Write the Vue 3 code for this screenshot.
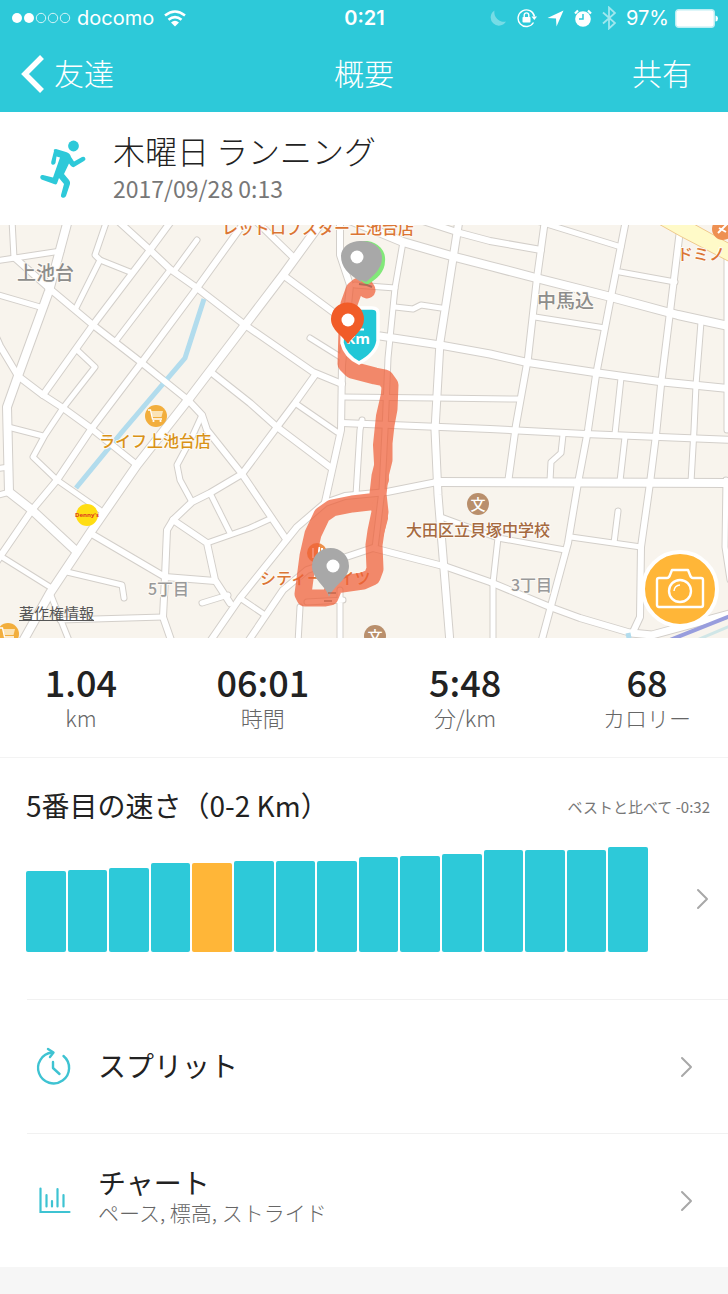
<script setup>
const roads = [
  { w: 8, d: 'M68 -5L49 66L18 151L7 182L9 267L32 285L75 325' },
  { w: 5, d: 'M12 -5L14 33' },
  { w: 5, d: 'M-5 36L15 33L61 26' },
  { w: 6, d: 'M15 33L50 64L93 100L142 138L188 175L202 190L207 205L242 249L286 314' },
  { w: 5, d: 'M-5 69L40 82' },
  { w: 6, d: 'M-5 110L0 121L18 151L43 170L63 183L92 204L137 240' },
  { w: 5, d: 'M107 -5L95 30L100 35L130 47' },
  { w: 5, d: 'M100 35L76 83' },
  { w: 6, d: 'M172 -5L150 25L93 100L43 170' },
  { w: 6, d: 'M117 -5L150 25L170 44L197 63L245 100L313 147L342 159' },
  { w: 5, d: 'M197 15L175 45' },
  { w: 5, d: 'M170 45L115 117' },
  { w: 6, d: 'M246 -5L197 63L142 137L92 203L57 255L32 285L-3 336' },
  { w: 5, d: 'M77 125L95 142L63 183L45 210L33 232L57 255L100 285' },
  { w: 8, d: 'M323 -5L283 50L245 100L188 175L137 240L90 308L50 368L22 418' },
  { w: 6, d: 'M212 148L250 178L277 202L330 242' },
  { w: 5, d: 'M202 190L192 212L177 240L180 255L192 277' },
  { w: 5, d: 'M8 202L43 211' },
  { w: 5, d: 'M-5 271L10 267M-5 244L9 242' },
  { w: 5, d: 'M2 332L50 362' },
  { w: 5, d: 'M67 347L122 360L124 373' },
  { w: 6, d: 'M90 308L165 352L215 356' },
  { w: 6, d: 'M315 150L295 178L277 202L242 249L210 268L192 277L173 295L167 305L165 352L163 392L172 418' },
  { w: 6, d: 'M173 295L207 318L215 355L230 378' },
  { w: 5, d: 'M207 318L250 303L272 293' },
  { w: 5, d: 'M210 268L230 308' },
  { w: 5, d: 'M202 378L228 370' },
  { w: 6, d: 'M209 418L240 373L297 302L325 278L345 271L387 267L437 257' },
  { w: 8, d: 'M437 257L733 258' },
  { w: 5, d: 'M60 395L163 392M50 368L70 418' },
  { w: 5, d: 'M240 373L265 390' },
  { w: 6, d: 'M247 418L283 365L307 345L373 323L447 342L490 357L550 382L580 393L631 408' },
  { w: 7, d: 'M631 408L652 410L733 388' },
  { w: 6, d: 'M340 -5L340 30L350 60L342 140L341 205L325 277' },
  { w: 5, d: 'M362 195L360 205L356 270' },
  { w: 5, d: 'M300 382L298 418M340 365L340 418M307 377L343 375' },
  { w: 6, d: 'M283 50L337 90M255 -5L293 32' },
  { w: 5, d: 'M310 113L342 133' },
  { w: 5, d: 'M295 178L337 207' },
  { w: 5, d: 'M403 17L395 63L388 133L385 205L382 265L375 323' },
  { w: 8, d: 'M350 -5L403 17L455 32L490 41L536 53L611 72L678 90L733 102' },
  { w: 6, d: 'M420 -5L460 8L490 16L541 25' },
  { w: 7, d: 'M459 -5L440 117L435 205L438 270L450 418' },
  { w: 5, d: 'M355 60L395 63M395 82L413 84L421 80L441 83' },
  { w: 7, d: 'M380 111L440 120L490 129L525 137L598 148L663 157L733 164' },
  { w: 5, d: 'M342 172L435 173L518 174' },
  { w: 6, d: 'M342 198L490 204L585 209L733 215' },
  { w: 6, d: 'M545 -5L537 53L528 133L516 200L508 258' },
  { w: 6, d: 'M626 -5L611 72L596 150L588 205L578 258L568 318L541 418' },
  { w: 6, d: 'M680 5L670 87L661 160L656 210L650 258L641 322L640 392L633 407' },
  { w: 5, d: 'M701 97L696 160L694 205L691 257' },
  { w: 5, d: 'M621 153L615 209M625 212L620 256' },
  { w: 5, d: 'M535 92L605 103M620 47L675 57M540 -3L621 22' },
  { w: 5, d: 'M563 210L561 228L551 237L550 256' },
  { w: 5, d: 'M727 30L727 205M726 255L725 322L730 355' },
  { w: 5, d: 'M571 312L641 322M618 286L614 318' },
  { w: 5, d: 'M441 292L498 313L565 325M498 313L493 358L493 418' }
]

const bars = [81, 82, 84, 89, 89, 91, 91, 91, 95, 96, 98, 102, 102, 102, 105]
const currentRun = 4

const stats = [
  { value: '1.04', label: 'km' },
  { value: '06:01', label: '時間' },
  { value: '5:48', label: '分/km' },
  { value: '68', label: 'カロリー' }
]
</script>

<template>
  <div class="app">
    <header class="top">
      <div class="status">
        <div class="carrier">
          <svg width="60" height="12" viewBox="0 0 60 12" aria-hidden="true">
            <g fill="#fff"><circle cx="6" cy="6" r="5" /><circle cx="18" cy="6" r="5" /></g>
            <g fill="none" stroke="#fff" opacity=".8"><circle cx="30" cy="6" r="4.7" /><circle cx="42" cy="6" r="4.7" /><circle cx="54" cy="6" r="4.7" /></g>
          </svg>
          <span>docomo</span>
          <svg class="wifi" width="22" height="17" viewBox="0 0 22 17" aria-hidden="true">
            <g fill="none" stroke="#fff" stroke-width="2.600"><path d="M1 5.500Q11 -2.500 21 5.500" /><path d="M4.500 9.800Q11 4.500 17.500 9.800" /></g>
            <path d="M7 12.500Q11 9 15 12.500L11 16.500Z" fill="#fff" />
          </svg>
        </div>
        <time class="clock">0:21</time>
        <div class="indicators">
          <svg width="18" height="18" viewBox="0 0 18 18" aria-hidden="true"><path d="M5.500 1.500A8.200 8.200 0 1 0 17 12.500A9.500 9.500 0 0 1 5.500 1.500Z" fill="#fff" opacity=".35" /></svg>
          <svg width="20" height="20" viewBox="0 0 20 20" aria-hidden="true">
            <path d="M16.500 14.500A8.300 8.300 0 1 1 17.500 8.500" fill="none" stroke="#fff" stroke-width="1.400" />
            <path d="M14.500 8.500H20L17.300 12Z" fill="#fff" /><rect x="5.500" y="9" width="8" height="5.500" rx=".8" fill="#fff" />
            <path d="M7.200 9V7.200a2.300 2.300 0 0 1 4.600 0V9" fill="none" stroke="#fff" stroke-width="1.400" />
          </svg>
          <svg width="17" height="17" viewBox="0 0 17 17" aria-hidden="true"><path d="M16.500 .5L9.500 16.500L9 8.500L.5 8Z" fill="#fff" /></svg>
          <svg width="18" height="18" viewBox="0 0 18 18" aria-hidden="true">
            <circle cx="9" cy="10" r="7.800" fill="#fff" /><path d="M1 4.500L4 1.500M17 4.500L14 1.500" stroke="#fff" stroke-width="2.200" />
            <path d="M9 5V10H5" fill="none" stroke="#2dc9d9" stroke-width="1.500" />
          </svg>
          <svg width="14" height="24" viewBox="0 0 14 24" aria-hidden="true"><path d="M1 6.500L13 17L7 22.500V1.500L13 7L1 17.500" fill="none" stroke="#fff" stroke-width="1.800" opacity=".55" /></svg>
          <span class="percent">97%</span>
          <svg width="43" height="19" viewBox="0 0 43 19" aria-hidden="true">
            <rect x=".7" y=".7" width="38.600" height="17.600" rx="3" fill="#fff" stroke="#bdeef3" stroke-width="1.400" /><path d="M40.500 6.500Q43 7 43 9.500T40.500 12.500Z" fill="#fff" />
          </svg>
        </div>
      </div>
      <nav class="bar">
        <button class="back" type="button">
          <svg width="24" height="38" viewBox="0 0 24 38" aria-hidden="true"><path d="M22 2L5 19L22 36" fill="none" stroke="#fff" stroke-width="5.500" /></svg>
          友達
        </button>
        <h1>概要</h1>
        <button class="share" type="button">共有</button>
      </nav>
    </header>

    <section class="activity">
      <svg class="runner" width="48" height="60" viewBox="0 0 48 60" aria-hidden="true">
        <circle cx="34.500" cy="7" r="5.400" fill="#2dc9d9" />
        <path d="M15 12Q14 10 17 10L27 13Q31 14 32 18L35 22.500L43 18Q46 17 46.500 20Q46.500 21 45 22L35 28Q33.500 28.500 32 27L30 24.500L25 35L30 41Q31.500 43 31 45L27 57Q26 59.500 23 58.500Q21.500 57.500 22 56L25 45L20 39L18 44.500Q17 46 15 45L2.500 40.500Q.5 39 1.500 37Q2.500 35.500 4 36L14 38.500L21 18.500L17.500 17.500L16.500 24Q15.500 26.500 13 25.500Q12 25 12.200 23Z" fill="#2dc9d9" />
      </svg>
      <div>
        <h2>木曜日 ランニング</h2>
        <time class="date">2017/09/28 0:13</time>
      </div>
    </section>

    <section class="map" aria-label="ルートマップ">
      <svg class="canvas" viewBox="0 0 728 413">
        <rect width="728" height="413" fill="#f8f4ed" />
        <g fill="none" stroke="#d3cfca" stroke-linecap="round" stroke-linejoin="round">
          <path v-for="(r, i) in roads" :key="i" :d="r.d" :stroke-width="r.w + 2" />
        </g>
        <path d="M204 74L185 133L122 207L76 263" fill="none" stroke="#b2dced" stroke-width="5" />
        <g fill="none" stroke="#fff" stroke-linecap="round" stroke-linejoin="round">
          <path v-for="(r, i) in roads" :key="i" :d="r.d" :stroke-width="r.w" />
        </g>
        <path d="M657 -2H692L730 19V37L680 11Z" fill="#fffac8" stroke="#efc98d" />
        <path d="M628 408L630 418" stroke="#b2dced" stroke-width="5" />
        <path d="M670 415L730 391" stroke="#989ddd" stroke-width="4" />
        <path d="M690 418L730 401" stroke="#d0e6e7" stroke-width="3" />

        <g>
          <circle cx="156" cy="191" r="11" fill="#f2ae3d" /><circle cx="8" cy="409" r="11" fill="#f2ae3d" />
          <g v-for="p in [[156, 191], [8, 409]]" :key="p[0]" :transform="`translate(${p[0]} ${p[1]})`">
            <path d="M-5 -5H7L5.500 1H-3.500Z" fill="#fbe3b6" />
            <path d="M-8 -6H-5.500L-3.500 3H6" fill="none" stroke="#fff" stroke-width="1.300" />
            <circle cx="-2.500" cy="5" r="1.100" fill="#fff" /><circle cx="4.500" cy="5" r="1.100" fill="#fff" />
          </g>
          <circle cx="87" cy="290" r="11" fill="#ffdd12" />
          <text x="87" y="292" class="dennys">Denny's</text>
          <circle cx="723" cy="4" r="11" fill="#ee9052" /><path d="M718 8L728 -2M719 3L726 7" stroke="#fff" stroke-width="2" />
          <circle cx="478" cy="279" r="11" fill="#b98f6c" /><circle cx="375" cy="411" r="11" fill="#b98f6c" />
          <g class="school"><text x="478" y="285">文</text><text x="375" y="417">文</text></g>
          <circle cx="317" cy="328" r="10" fill="#ed8f49" /><path d="M313 323V333M319 322V333M322 323V331" stroke="#fff" stroke-width="2" />
        </g>

        <g class="labels">
          <g class="area"><text x="17" y="55">上池台</text><text x="537" y="83">中馬込</text></g>
          <g class="block"><text x="148" y="370">5丁目</text><text x="511" y="366">3丁目</text></g>
          <g class="food"><text x="222" y="9">レッドロブスター上池台店</text><text x="677" y="35">ドミノ</text><text x="260" y="359">シティーハイツ</text></g>
          <text class="shop" x="99" y="222">ライフ上池台店</text>
          <text class="place" x="406" y="311">大田区立貝塚中学校</text>
        </g>

        <g fill="none" stroke="#f05f38" stroke-linecap="round" stroke-linejoin="round" opacity=".72">
          <path d="M367 65L365 62L359 61L354 65L349 79L347 105L346 139L352 145L375 151L385 153L390 160L389 184L386 200L384 218L384 235L380 251L378 269L380 287L376 306L374 320L375 344L372 352L363 356L335 360L330 372L325 373L305 373L303 369L308 331L313 309L322 290L332 283L352 279L378 276" stroke-width="17" />
          <path d="M389 165L383 191L380 220L382 255M379 280L381 293L375 315" stroke-width="14" />
        </g>

        <path d="M367 60C356 53 345 43 345 32A20 18 0 0 1 385 36C385 47 377 54 367 60Z" fill="#82e879" />
        <path d="M361 57C348 49 341 42 341 31A19 15 0 0 1 361 16C374 16 382 23 382 33C382 44 373 51 366 57L361 55Z" fill="#a8a8a8" />
        <path d="M359 59L367 60L372 62" fill="none" stroke="#955c4c" stroke-width="2" opacity=".7" />
        <circle cx="357" cy="32" r="6.500" fill="#fff" />
        <path d="M343 83H372Q378 83 378 88V116Q376 129 359 138Q345 131 342 118Z" fill="#22c7d7" stroke="#fff" stroke-width="3.500" />
        <path d="M357 104.500H364" stroke="#fff" stroke-width="2" />
        <text class="distance" x="358" y="119">km</text>
        <path d="M348 119C343 111 331 105 331 94A16.500 16.500 0 0 1 364 94C364 105 353 111 348 119Z" fill="#f15c28" />
        <circle cx="348" cy="95" r="6.500" fill="#fff" />
        <path d="M329 372C327 362 312 354 312 341A18.500 18 0 0 1 349 341C349 354 334 360 329 372Z" fill="#a8a8a8" />
        <circle cx="333" cy="341" r="6.500" fill="#fff" />
        <path d="M328 368H336M324 376H332" stroke="#b4583e" stroke-width="1.500" opacity=".7" />
      </svg>
      <a class="legal" href="#">著作権情報</a>
      <button class="camera" type="button" aria-label="写真を追加">
        <svg width="50" height="42" viewBox="0 0 50 42" aria-hidden="true">
          <g fill="none" stroke="#fff" stroke-width="2.400" stroke-linejoin="round">
            <path d="M4 10H12Q14 10 15 7L17 2H33L35 7Q36 10 38 10H46Q48 10 48 12V37Q48 39 46 39H4Q2 39 2 37V12Q2 10 4 10Z" />
            <circle cx="25" cy="23" r="11" /><path d="M19 23A6 6 0 0 1 25 17" stroke-width="1.500" />
          </g>
        </svg>
      </button>
    </section>

    <dl class="stats">
      <div v-for="s in stats" :key="s.label">
        <dd>{{ s.value }}</dd>
        <dt>{{ s.label }}</dt>
      </div>
    </dl>

    <section class="rank">
      <div class="rank-head">
        <h3>5番目の速さ（0-2 Km）</h3>
        <span>ベストと比べて -0:32</span>
      </div>
      <button class="rank-chart" type="button" aria-label="5番目の速さ">
        <span class="bars">
          <span v-for="(h, i) in bars" :key="i" class="col" :class="{ current: i === currentRun }" :style="{ height: h + 'px' }"></span>
        </span>
        <svg class="chevron" width="14" height="22" viewBox="0 0 14 22" aria-hidden="true"><path d="M2 2L11 11L2 20" /></svg>
      </button>
    </section>

    <button class="row" type="button">
      <svg class="icon" width="36" height="40" viewBox="0 0 36 40" aria-hidden="true">
        <g fill="none" stroke="#3ec3d2" stroke-width="2.400" stroke-linecap="round" stroke-linejoin="round">
          <path d="M28.500 9A15.500 15.500 0 1 1 17 5.500" /><path d="M13 2L18.500 5.500L15 10" /><path d="M18 15V21L24.500 27" />
        </g>
      </svg>
      <span class="words"><span class="name">スプリット</span></span>
      <svg class="chevron" width="14" height="22" viewBox="0 0 14 22" aria-hidden="true"><path d="M2 2L11 11L2 20" /></svg>
    </button>
    <button class="row" type="button">
      <svg class="icon" width="36" height="28" viewBox="0 0 36 28" aria-hidden="true">
        <g fill="none" stroke="#3ec3d2" stroke-width="2.200" stroke-linecap="round">
          <path d="M5.500 1.500V25H34.500" /><path d="M11.500 8V19.500M17 14V19.500M22.500 2V19.500M28.500 8V19.500" />
        </g>
      </svg>
      <span class="words"><span class="name">チャート</span><span class="detail">ペース, 標高, ストライド</span></span>
      <svg class="chevron" width="14" height="22" viewBox="0 0 14 22" aria-hidden="true"><path d="M2 2L11 11L2 20" /></svg>
    </button>
    <footer class="gap"></footer>
  </div>
</template>

<style>
body { margin: 0; background: #fff; }
</style>

<style scoped>
.app { font-family: "Noto Sans CJK JP", sans-serif; color: #222; display: flex; flex-direction: column; min-height: 100vh; }
h1, h2, h3, dl, dd { margin: 0; font-weight: 400; }
button { border: 0; padding: 0; background: none; font: inherit; color: inherit; cursor: pointer; text-align: left; }
svg { display: block; flex: none; }

.top { background: #2dc9d9; color: #fff; }
.status { display: grid; grid-template-columns: 1fr auto 1fr; align-items: center; height: 36px; padding: 0 10px 0 11px; font: 20px/24px Inter, sans-serif; }
.carrier { display: flex; align-items: center; gap: 6px; }
.wifi { margin-left: 4px; }
.clock { font-weight: 600; }
.indicators { display: flex; align-items: center; justify-content: flex-end; gap: 10px; }
.percent { margin-right: -4px; }
.bar { display: grid; grid-template-columns: 1fr auto 1fr; align-items: center; box-sizing: border-box; height: 76px; padding: 0 36px 4px 20px; font-size: 30px; font-weight: 300; }
.bar h1 { font-size: 30px; font-weight: 300; padding-left: 16px; }
.back { display: flex; align-items: center; gap: 10px; }
.back svg { margin-top: 4px; }
.share { justify-self: end; }

.activity { display: flex; align-items: center; gap: 26px; height: 113px; padding-left: 39px; }
.activity h2 { font-size: 32px; line-height: 40px; font-weight: 300; color: #222; }
.date { display: block; font-size: 23px; line-height: 36px; padding-bottom: 2px; color: #777; }

.map { position: relative; overflow: hidden; }
.canvas { width: 100%; height: auto; }
.labels { font-size: 16px; font-weight: 500; paint-order: stroke; stroke: #fdfaf5; stroke-width: 2px; stroke-linejoin: round; }
.area { font-size: 19px; fill: #8d8d8b; }
.block { fill: #999; }
.food { fill: #db7534; }
.shop { fill: #d99217; }
.place { fill: #a5693f; }
.dennys { font: bold 6px "Open Sans", sans-serif; fill: #e03a20; text-anchor: middle; }
.school { font-size: 15px; font-weight: 500; fill: #fff; text-anchor: middle; }
.distance { font: 700 15px "Open Sans", sans-serif; fill: #fff; text-anchor: middle; }
.legal { position: absolute; left: 19px; bottom: 13px; font-size: 15px; line-height: 24px; color: #555; }
.camera { position: absolute; right: 9px; bottom: 10px; display: flex; align-items: center; justify-content: center; box-sizing: border-box; width: 78px; height: 78px; border: 4px solid #fff; border-radius: 50%; background: #ffb638; }

.stats { display: grid; grid-template-columns: 4fr 5fr 5fr 4fr; padding: 21px 0 26px; border-bottom: 1px solid #f3f3f3; text-align: center; }
.stats dd { font-size: 36px; line-height: 44px; font-weight: 500; }
.stats dt { font-size: 22px; line-height: 28px; font-weight: 300; color: #666; }

.rank { box-sizing: border-box; height: 241px; padding: 27px 18px 0 26px; }
.rank-head { display: flex; justify-content: space-between; align-items: center; gap: 16px; line-height: 40px; }
.rank h3 { font-size: 28px; }
.rank-head span { padding-top: 4px; font-size: 15px; line-height: 24px; color: #777; }
.rank-chart { display: flex; align-items: center; justify-content: space-between; gap: 48px; width: 100%; margin-top: 21px; }
.bars { flex: 1; display: flex; align-items: flex-end; gap: 2px; height: 106px; }
.col { flex: 1; border-radius: 2px; background: #2dc9d9; }
.col.current { background: #ffb638; }
.chevron { fill: none; stroke: #a8a8a8; stroke-width: 2px; stroke-linecap: round; stroke-linejoin: round; }

.row { display: flex; align-items: center; box-sizing: border-box; height: 134px; margin-left: 27px; padding: 0 34px 0 8px; border-top: 1px solid #f1f1f1; }
.words { flex: 1; display: flex; flex-direction: column; margin-left: 27px; padding-bottom: 4px; }
.name { font-size: 28px; line-height: 32px; }
.detail { font-size: 21px; line-height: 28px; padding-bottom: 6px; font-weight: 300; color: #666; }
.gap { flex: 1; min-height: 26px; background: #f6f6f6; }
</style>
